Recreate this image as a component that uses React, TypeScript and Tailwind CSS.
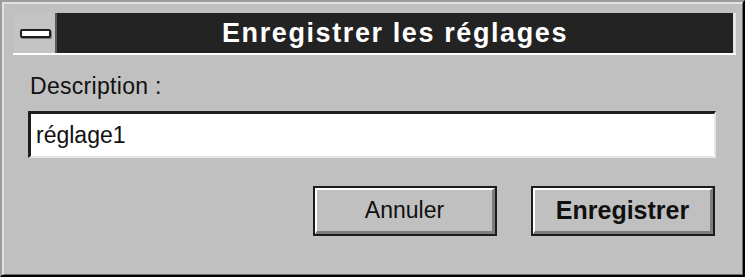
import React, { useState } from "react";

const font = { fontFamily: '"Liberation Sans", Arial, sans-serif' };

const SysMenu: React.FC = () => (
  <div className="w-[42px] h-full bg-[#c4c4c4] border-r-2 border-[#5a5a5a] flex items-center justify-center">
    <div className="w-[31px] h-[9px] rounded-[2px] border-2 border-[#1e1e1e] bg-white shadow-[1px_1px_0_#7a7a7a]" />
  </div>
);

const Button: React.FC<{ label: string; bold?: boolean }> = ({ label, bold }) => (
  <button className="w-[184px] h-[50px] border-2 border-[#1c1c1c] bg-[#c0c0c0] p-0">
    <div
      className={`w-full h-full flex items-center justify-center border-t-2 border-l-2 border-white border-r-[3px] border-b-[3px] border-r-[#7c7c7c] border-b-[#7c7c7c] text-[#101010] ${
        bold ? "font-bold text-[25px]" : "text-[23px]"
      }`}
    >
      {label}
    </div>
  </button>
);

const App: React.FC = () => {
  const [value, setValue] = useState("réglage1");

  return (
    <div className="w-[748px] h-[279px] bg-white" style={font}>
      <div className="w-[745px] h-[277px] bg-[#c0c0c0] border-t-2 border-l-2 border-[#9c9c9c] border-r-2 border-b-2 border-r-black border-b-black">
        <div className="w-full h-full flex flex-col border-t-2 border-l-2 border-[#e2e2e2] border-r border-b border-r-[#6a6a6a] border-b-[#6a6a6a]">
          {/* title row */}
          <div className="pt-[9px] pl-[9px] pr-[6px]">
            <div className="flex h-[42px] border-b-2 border-white pl-[2px]">
              <SysMenu />
              <div className="flex-1 bg-[#232323] border-r-[3px] border-[#e4e4e4] flex items-center justify-center">
                <span className="text-white font-bold text-[27px] leading-none tracking-[1.6px]">
                  Enregistrer les réglages
                </span>
              </div>
            </div>
          </div>

          {/* client area */}
          <div className="flex-1 flex flex-col pl-[24px] pr-[26px]">
            <div className="mt-[18px] pl-[2px] text-[23px] leading-[26px] text-[#111] tracking-[0.3px]">
              Description :
            </div>
            <div className="mt-[12px] h-[47px] border-t-[3px] border-l-[3px] border-[#1e1e1e] border-r-2 border-b-2 border-r-[#e6e6e6] border-b-[#e6e6e6]">
              <input
                value={value}
                onChange={(e) => setValue(e.target.value)}
                className="w-full h-full bg-white outline-none px-[5px] text-[23px] text-[#111]"
                style={font}
              />
            </div>
            <div className="mt-[28px] flex justify-end gap-[34px] pr-[1px]">
              <Button label="Annuler" />
              <Button label="Enregistrer" bold />
            </div>
          </div>
        </div>
      </div>
    </div>
  );
};

export default App;
